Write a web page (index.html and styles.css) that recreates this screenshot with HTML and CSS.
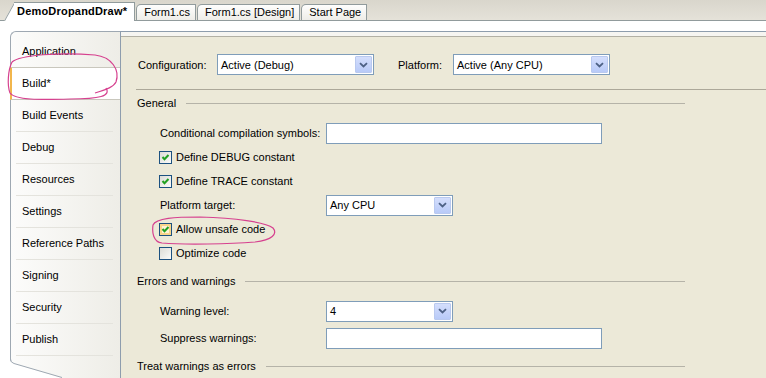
FILE: index.html
```html
<!DOCTYPE html>
<html lang="en">
  <head>
    <meta charset="UTF-8" />
    <meta name="viewport" content="width=device-width, initial-scale=1.0" />
    <title>DemoDropandDraw - Build</title>
    <link rel="stylesheet" href="styles.css">
  </head>
  <body>
    <div class="tabs">
      <div class="tab active">DemoDropandDraw*</div>
      <div class="tab">Form1.cs</div>
      <div class="tab">Form1.cs [Design]</div>
      <div class="tab">Start Page</div>
    </div>

    <div class="page">
      <div class="side">
        <div class="side-item">Application</div>
        <div class="side-item selected">Build*</div>
        <div class="side-item">Build Events</div>
        <div class="side-item">Debug</div>
        <div class="side-item">Resources</div>
        <div class="side-item">Settings</div>
        <div class="side-item">Reference Paths</div>
        <div class="side-item">Signing</div>
        <div class="side-item">Security</div>
        <div class="side-item">Publish</div>
        <svg class="side-curl" width="70" height="23" viewBox="0 0 70 23">
          <path d="M0 4 Q0.5 8 4 9 L52 23 L0 23 Z" fill="#fff" />
          <path d="M0.5 0 V4 Q0.5 7.5 4 8.5 L52 22.5" fill="none" stroke="#9ea8b2" />
        </svg>
      </div>

      <div class="main">
        <div class="main-inner">
          <div class="config">
            <span class="config-label">Configuration:</span>
            <div class="combo config-combo">
              <span>Active (Debug)</span>
              <span class="drop"><svg width="9" height="6" viewBox="0 0 9 6"><path d="M1 1.2l3.5 3.3L8 1.2" fill="none" stroke="#4d6185" stroke-width="1.8" /></svg></span>
            </div>
            <span class="config-label platform">Platform:</span>
            <div class="combo config-combo">
              <span>Active (Any CPU)</span>
              <span class="drop"><svg width="9" height="6" viewBox="0 0 9 6"><path d="M1 1.2l3.5 3.3L8 1.2" fill="none" stroke="#4d6185" stroke-width="1.8" /></svg></span>
            </div>
          </div>

          <div class="rule"></div>

          <div class="group">General</div>

          <div class="field">
            <span class="field-label">Conditional compilation symbols:</span>
            <div class="text-box"></div>
          </div>
          <div class="check">
            <span class="box"><svg width="11" height="11" viewBox="0 0 11 11"><path d="M2.5 5l2 2.2L8.5 3" fill="none" stroke="#21a121" stroke-width="2" /></svg></span>
            Define DEBUG constant
          </div>
          <div class="check">
            <span class="box"><svg width="11" height="11" viewBox="0 0 11 11"><path d="M2.5 5l2 2.2L8.5 3" fill="none" stroke="#21a121" stroke-width="2" /></svg></span>
            Define TRACE constant
          </div>
          <div class="field">
            <span class="field-label">Platform target:</span>
            <div class="combo short">
              <span>Any CPU</span>
              <span class="drop"><svg width="9" height="6" viewBox="0 0 9 6"><path d="M1 1.2l3.5 3.3L8 1.2" fill="none" stroke="#4d6185" stroke-width="1.8" /></svg></span>
            </div>
          </div>
          <div class="check">
            <span class="box hot"><svg width="11" height="11" viewBox="0 0 11 11"><path d="M2.5 5l2 2.2L8.5 3" fill="none" stroke="#21a121" stroke-width="2" /></svg></span>
            Allow unsafe code
          </div>
          <div class="check">
            <span class="box"></span>
            Optimize code
          </div>

          <div class="group">Errors and warnings</div>

          <div class="field">
            <span class="field-label">Warning level:</span>
            <div class="combo short">
              <span>4</span>
              <span class="drop"><svg width="9" height="6" viewBox="0 0 9 6"><path d="M1 1.2l3.5 3.3L8 1.2" fill="none" stroke="#4d6185" stroke-width="1.8" /></svg></span>
            </div>
          </div>
          <div class="field spaced">
            <span class="field-label">Suppress warnings:</span>
            <div class="text-box"></div>
          </div>

          <div class="group">Treat warnings as errors</div>
        </div>
      </div>
    </div>

    <!-- pen marks drawn over the screenshot -->
    <svg class="marks" width="766" height="378" viewBox="0 0 766 378">
      <path d="M12 62 C20 55, 60 52, 95 55 C112 57, 120 70, 116 82 C113 88, 104 90, 95 93 M106 88 C111 96, 100 99, 70 99 C40 100, 15 100, 10 93 C7 85, 8 70, 12 62" />
      <path d="M153 225 C156 218, 175 217, 200 217 C235 218, 265 222, 273 228 C278 234, 272 240, 255 242 C230 244, 185 245, 162 243 C153 242, 152 232, 153 225 Z" />
    </svg>
  </body>
</html>
```

FILE: styles.css
```css
* {
  box-sizing: border-box;
}

body {
  margin: 0;
  width: 766px;
  height: 378px;
  overflow: hidden;
  position: relative;
  background: #fff;
  font-family: "Liberation Sans", Arial, sans-serif;
  font-size: 11px;
  color: #000;
}

/* document tabs */
.tabs {
  position: relative;
  z-index: 0;
  display: flex;
  align-items: flex-end;
  height: 21px;
  padding-left: 14px;
  background: linear-gradient(#d9d6cc, #e5e2d9);
  border-bottom: 1px solid #919b9c;
}

.tab {
  position: relative;
  height: 16px;
  line-height: 15px;
  padding: 0 5px 0 7px;
  margin-left: 1px;
  border: 1px solid #919b9c;
  border-bottom: none;
  border-top-left-radius: 5px;
  background: linear-gradient(#fefefd, #eeede8);
  white-space: nowrap;
}

.tab.active {
  height: 19px;
  line-height: 17px;
  margin: 0 0 -1px 0;
  padding: 0 7px 0 3px;
  border-left: none;
  border-top-left-radius: 0;
  background: #fff;
  font-weight: bold;
  letter-spacing: 0.2px;
}

.tab.active::before {
  content: "";
  position: absolute;
  z-index: -1;
  left: -10px;
  top: -1px;
  bottom: 0;
  width: 14px;
  background: #fff;
  border-left: 1px solid #919b9c;
  border-top: 1px solid #919b9c;
  transform: skewX(-29deg);
  transform-origin: bottom left;
}

.page {
  display: flex;
  height: 357px;
  padding: 10px 0 0 10px;
}

/* left page list */
.side {
  position: relative;
  flex: none;
  width: 110px;
  padding-top: 4px;
  border-left: 1px solid #9ea8b2;
  border-top: 1px solid #9ea8b2;
  border-top-left-radius: 6px;
  background: linear-gradient(to right, #fcfcfb, #eeede7);
}

.side-item {
  height: 32px;
  line-height: 31px;
  margin: 0 7px 0 5px;
  padding-left: 6px;
  border-bottom: 1px solid #e4e3dd;
}

.side-item.selected {
  height: 33px;
  margin: -1px 0 0 -1px;
  padding-left: 10px;
  background: #fff;
  border-top: 1px solid #c9c7bd;
  border-bottom: 1px solid #c9c7bd;
  border-left: 2px solid #f2b64c;
}

.side-curl {
  position: absolute;
  left: -1px;
  bottom: 0;
}

/* property page */
.main {
  flex: 1;
  padding-top: 4px;
  border-top: 1px solid #8e9dad;
  border-left: 1px solid #8e9dad;
  background: #f6f5f1;
}

.main-inner {
  height: 100%;
  padding: 17px 0 0 16px;
  border-top: 1px solid #b2b0a4;
  background: #ece9d8;
}

.config {
  display: flex;
  align-items: center;
  height: 21px;
  padding-left: 1px;
}

.config-label {
  width: 79px;
}

.config-label.platform {
  width: 55px;
  margin-left: 24px;
}

.combo {
  display: flex;
  align-items: center;
  height: 21px;
  padding-left: 3px;
  border: 1px solid #7f9db9;
  background: #fff;
}

.combo > span:first-child {
  flex: 1;
}

.config-combo {
  width: 157px;
}

.combo.short {
  width: 127px;
}

.drop {
  display: flex;
  align-items: center;
  justify-content: center;
  width: 17px;
  height: 17px;
  margin-right: 1px;
  border: 1px solid #b9c9ef;
  border-radius: 1px;
  background: linear-gradient(#d4defc, #b8caf8);
}

.rule {
  height: 1px;
  margin: 14px 0 6px -1px;
  background: #aca899;
}

.group {
  display: flex;
  align-items: center;
  height: 14px;
  margin-right: 81px;
}

.group::after {
  content: "";
  flex: 1;
  height: 1px;
  margin-left: 10px;
  background: #b5b3a8;
}

.group + .field,
.group + .check {
  margin-top: 11px;
}

.field + .group,
.check + .group {
  margin-top: 9px;
}

.field {
  display: flex;
  align-items: center;
  height: 24px;
  padding-left: 23px;
}

.field.spaced {
  margin-top: 3px;
}

.field-label {
  width: 166px;
}

.text-box {
  width: 276px;
  height: 21px;
  border: 1px solid #7f9db9;
  background: #fff;
}

.check {
  display: flex;
  align-items: center;
  gap: 4px;
  height: 24px;
  padding-left: 22px;
}

.box {
  display: flex;
  align-items: center;
  justify-content: center;
  width: 13px;
  height: 13px;
  border: 1px solid #1c5180;
  background: linear-gradient(135deg, #dcdcd6, #fbfbf9);
}

.box.hot {
  box-shadow: inset 0 0 0 2px #f9d58a;
  background: #fdf3d6;
}

.marks {
  position: absolute;
  left: 0;
  top: 0;
  pointer-events: none;
  fill: none;
  stroke: #d6418f;
  stroke-width: 1.2;
}
```
